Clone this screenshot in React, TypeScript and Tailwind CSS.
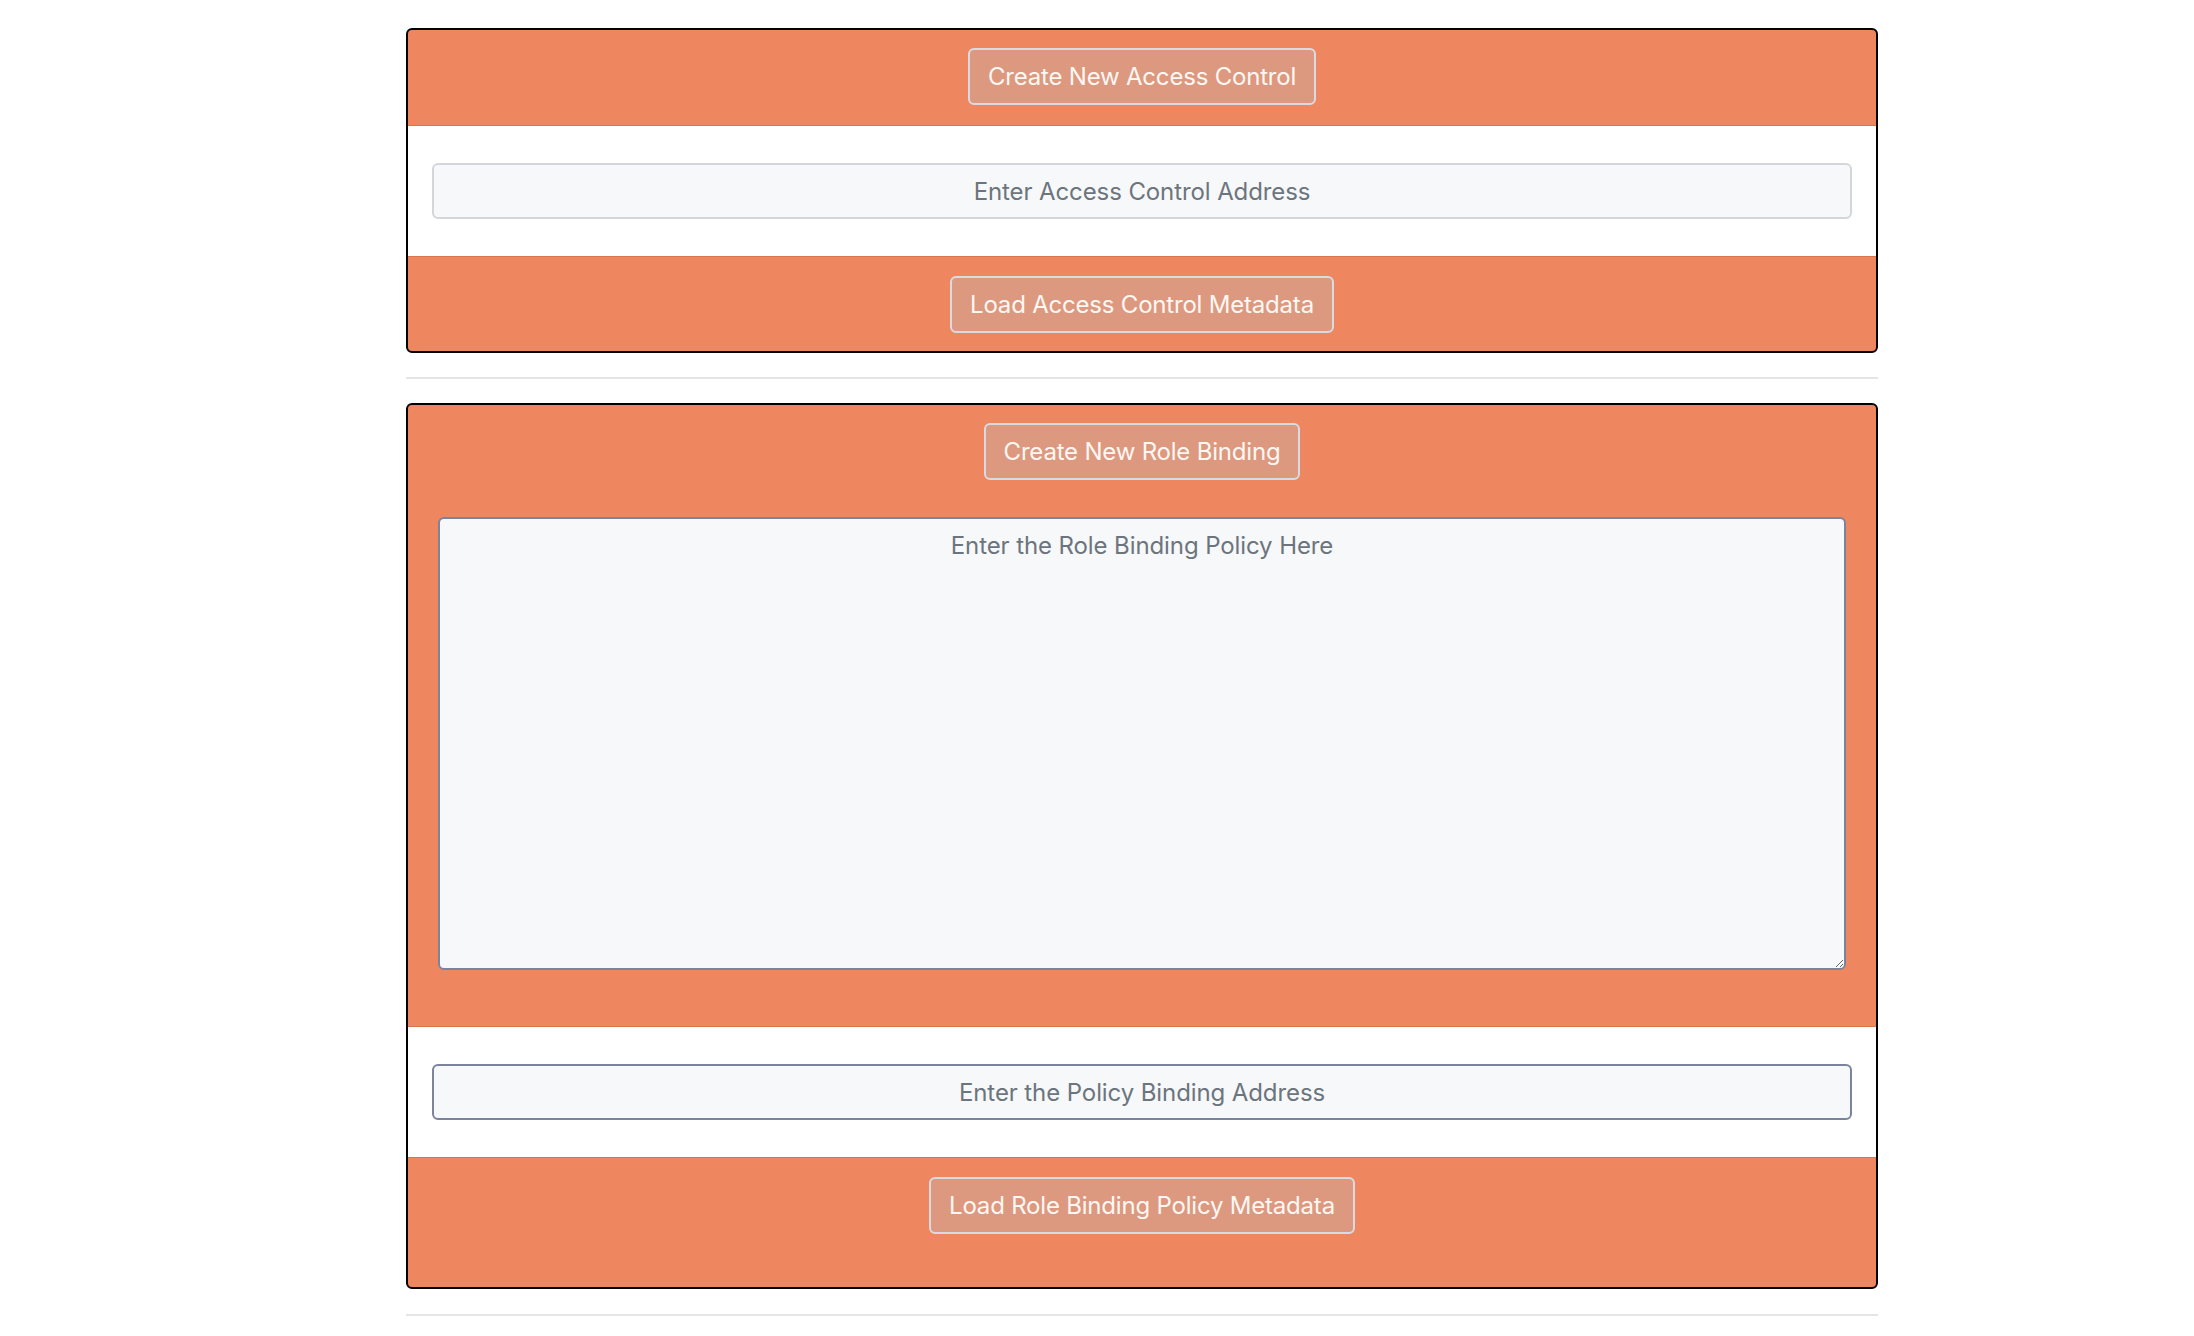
import React from "react";

const font = { fontFamily: "Inter, 'Noto Sans', sans-serif" };

function Btn({ children }: { children: React.ReactNode }) {
  return (
    <button
      type="button"
      className="h-[57px] px-[18px] rounded-[6px] border-2 border-[#d8dce2] bg-[#dc997f] text-[24px] leading-[36px] text-[#fff7f3] tracking-[-0.2px]"
    >
      {children}
    </button>
  );
}

function Field({ placeholder, dark }: { placeholder: string; dark?: boolean }) {
  return (
    <input
      type="text"
      placeholder={placeholder}
      className={
        "block w-full h-[56px] rounded-[6px] border-2 bg-[#f7f8fa] text-center text-[24px] leading-[36px] tracking-[-0.1px] text-[#495057] placeholder:text-[#6c757d] outline-none " +
        (dark ? "border-[#7b849c]" : "border-[#d3d7dc]")
      }
    />
  );
}

export default function App() {
  return (
    <div className="min-h-screen bg-white pt-[28px] pl-[406px]" style={font}>
      <div className="w-[1472px]">
        <div className="rounded-[6px] border-2 border-black overflow-hidden bg-[#ee865f]">
          <div className="flex justify-center pt-[18px] pb-[20px] border-b border-[#d8764f]">
            <Btn>Create New Access Control</Btn>
          </div>
          <div className="bg-white px-[24px] py-[37px]">
            <Field placeholder="Enter Access Control Address" />
          </div>
          <div className="flex justify-center pt-[19px] pb-[18px] border-t border-[#d8764f]">
            <Btn>Load Access Control Metadata</Btn>
          </div>
        </div>

        <div className="mt-[24px] mb-[24px] h-[2px] bg-[#e5e5e5]" />

        <div className="rounded-[6px] border-2 border-black overflow-hidden bg-[#ee865f]">
          <div className="flex flex-col items-center pt-[18px] pb-[56px] px-[30px] border-b border-[#d8764f]">
            <Btn>Create New Role Binding</Btn>
            <textarea
              placeholder="Enter the Role Binding Policy Here"
              className="block mt-[37px] w-full h-[453px] rounded-[6px] border-2 border-[#7b849c] bg-[#f7f8fa] px-[18px] py-[9px] text-center text-[24px] leading-[36px] tracking-[-0.1px] text-[#495057] placeholder:text-[#6c757d] outline-none"
            />
          </div>
          <div className="bg-white px-[24px] py-[37px]">
            <Field placeholder="Enter the Policy Binding Address" dark />
          </div>
          <div className="flex justify-center pt-[19px] pb-[53px] border-t border-[#d8764f]">
            <Btn>Load Role Binding Policy Metadata</Btn>
          </div>
        </div>

        <div className="my-[25px] h-[2px] bg-[#e5e5e5]" />
      </div>
    </div>
  );
}
